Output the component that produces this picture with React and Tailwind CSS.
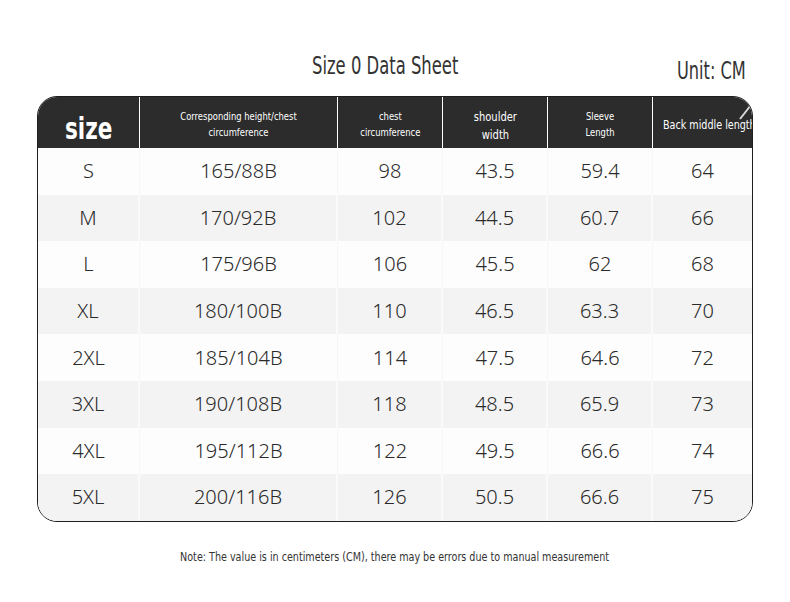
import React from "react";

const cond = { fontFamily: '"DejaVu Sans Condensed", "DejaVu Sans", sans-serif' };

const rows = [
  ["S", "165/88B", "98", "43.5", "59.4", "64"],
  ["M", "170/92B", "102", "44.5", "60.7", "66"],
  ["L", "175/96B", "106", "45.5", "62", "68"],
  ["XL", "180/100B", "110", "46.5", "63.3", "70"],
  ["2XL", "185/104B", "114", "47.5", "64.6", "72"],
  ["3XL", "190/108B", "118", "48.5", "65.9", "73"],
  ["4XL", "195/112B", "122", "49.5", "66.6", "74"],
  ["5XL", "200/116B", "126", "50.5", "66.6", "75"],
];

const widths = ["w-[102px]", "w-[198px]", "w-[105px]", "w-[105px]", "w-[105px]", "flex-1"];

export default function App() {
  return (
    <div className="w-[790px] h-[602px] bg-white flex flex-col items-center pt-[51px]">
      <div className="w-[716px] flex items-end justify-between pr-[7px] text-[#333] font-stretch-condensed" style={cond}>
        <p className="ml-[275px] text-[24px] leading-[30px] origin-left scale-x-[0.76] whitespace-nowrap">Size 0 Data Sheet</p>
        <p className="text-[24px] leading-[30px] -mb-[5px] origin-right scale-x-[0.75] whitespace-nowrap">Unit: CM</p>
      </div>

      <div className="relative mt-[15px] w-[716px] rounded-[20px] border border-[#1e1e1e] overflow-hidden">
        <div className="flex h-[51px] bg-[#2c2c2c] text-white font-stretch-condensed" style={cond}>
          <div className={`${widths[0]} flex items-end justify-center pb-[1px] border-r border-white`}>
            <span className="text-[30px] font-bold leading-[36px] scale-x-[0.8]">size</span>
          </div>
          <div className={`${widths[1]} flex items-center justify-center pt-[5px] text-center text-[11px] leading-[16px] border-r border-white`}>
            <span className="scale-x-[0.85] whitespace-nowrap">Corresponding height/chest<br />circumference</span>
          </div>
          <div className={`${widths[2]} flex items-center justify-center pt-[5px] text-center text-[11px] leading-[16px] border-r border-white`}>
            <span className="scale-x-[0.85]">chest<br />circumference</span>
          </div>
          <div className={`${widths[3]} flex items-center justify-center pt-[6px] text-center text-[13px] leading-[18px] border-r border-white`}>
            <span className="scale-x-[0.85]">shoulder<br />width</span>
          </div>
          <div className={`${widths[4]} flex items-center justify-center pt-[5px] text-center text-[11px] leading-[16px] border-r border-white`}>
            <span className="scale-x-[0.85]">Sleeve<br />Length</span>
          </div>
          <div className={`${widths[5]} flex items-center pl-[10px] pt-[5px] text-[13px] whitespace-nowrap overflow-hidden`}>
            <span className="origin-left scale-x-[0.82]">Back middle length</span>
          </div>
        </div>

        {rows.map((r, i) => (
          <div
            key={r[0]}
            className={`flex h-[46.6px] ${i % 2 === 0 ? "bg-[#fdfdfd]" : "bg-[#f3f3f3]"}`}
            style={{ fontFamily: '"Noto Sans", sans-serif' }}
          >
            {r.map((v, j) => (
              <div
                key={j}
                className={`${widths[j]} flex items-center justify-center text-[20px] font-light text-[#2a2a2a] ${j < 5 ? (i % 2 === 0 ? "border-r border-[#f6f6f6]" : "border-r-2 border-[#fafafa]") : ""}`}
              >
                {v}
              </div>
            ))}
          </div>
        ))}

        <svg className="absolute right-0 top-[6px]" width="14" height="20" viewBox="0 0 14 20">
          <path d="M13 2 L2 16" stroke="#d8d8d8" strokeWidth="2" />
        </svg>
      </div>

      <p className="mt-[25px] text-[13px] text-[#333] font-stretch-condensed scale-x-[0.82] whitespace-nowrap" style={cond}>
        Note: The value is in centimeters (CM), there may be errors due to manual measurement
      </p>
    </div>
  );
}
